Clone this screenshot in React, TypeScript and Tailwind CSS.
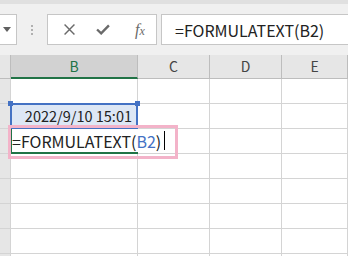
import React from 'react'

const COLS = [
  { key: 'B', w: 'w-[127px]' },
  { key: 'C', w: 'w-[72px]' },
  { key: 'D', w: 'w-[72px]' },
  { key: 'E', w: 'flex-1' },
]

const font = { fontFamily: '"Noto Sans CJK JP", "Noto Sans", sans-serif' }

function Toolbar() {
  return (
    <div className="h-[51px] bg-[#f0f0f0] flex items-start pt-[10px]">
      {/* name box */}
      <div className="w-[17px] h-[31px] bg-white border border-l-0 border-[#c6c6c6] flex items-center justify-center">
        <svg width="8" height="5" viewBox="0 0 8 5" className="-ml-[2px]">
          <path d="M0 0 H8 L4 5 Z" fill="#606060" />
        </svg>
      </div>
      <div className="w-[30px] h-[31px] flex flex-col items-center justify-center gap-[2px]">
        <span className="w-[2px] h-[2px] bg-[#b0b0b0]" />
        <span className="w-[2px] h-[2px] bg-[#b0b0b0]" />
        <span className="w-[2px] h-[2px] bg-[#b0b0b0]" />
      </div>
      {/* cancel / enter / fx */}
      <div className="w-[110px] h-[31px] bg-white border border-[#c6c6c6] flex items-center">
        <div className="w-[38px] flex justify-center pl-[4px]">
          <svg width="11" height="11" viewBox="0 0 10 10">
            <path d="M0.5 0.5 L9.5 9.5 M9.5 0.5 L0.5 9.5" stroke="#6a6a6a" strokeWidth="1.3" />
          </svg>
        </div>
        <div className="w-[34px] flex justify-center">
          <svg width="14" height="11" viewBox="0 0 13 10">
            <path d="M1 5 L4.8 8.6 L12 1.2" stroke="#6a6a6a" strokeWidth="2.2" fill="none" />
          </svg>
        </div>
        <div
          className="flex-1 flex justify-center pl-[4px] text-[16px] italic text-[#6a6a6a] leading-none"
          style={{ fontFamily: '"Liberation Serif", serif' }}
        >
          f<span className="text-[12px] relative top-[3px]">x</span>
        </div>
      </div>
      {/* formula input */}
      <div className="ml-[4px] flex-1 h-[31px] bg-white border border-r-0 border-[#c6c6c6] flex items-center pl-[13px]">
        <span className="text-[16px] text-[#222]" style={font}>=FORMULATEXT(B2)</span>
      </div>
    </div>
  )
}

function Header() {
  return (
    <div className="flex h-[24px] bg-[#e6e6e6]" style={font}>
      <div className="w-[11px] border-r border-b border-[#bdbdbd]" />
      {COLS.map(c =>
        c.key === 'B' ? (
          <div
            key={c.key}
            className={`${c.w} bg-[#d2d2d2] border-r border-[#bdbdbd] border-b-2 border-b-[#217346] flex items-center justify-center text-[14px] text-[#217346]`}
          >
            {c.key}
          </div>
        ) : (
          <div
            key={c.key}
            className={`${c.w} border-r border-b border-[#bdbdbd] flex items-center justify-center text-[14px] text-[#444]`}
          >
            {c.key}
          </div>
        )
      )}
    </div>
  )
}

function Row() {
  return (
    <div className="flex h-[25px]">
      <div className="w-[11px] bg-[#e6e6e6] border-r border-b border-[#d4d4d4]" />
      {COLS.map(c => (
        <div key={c.key} className={`${c.w} border-r border-b border-[#d4d4d4] bg-white`} />
      ))}
    </div>
  )
}

export default function App() {
  return (
    <div className="w-[348px] h-[256px] overflow-hidden bg-white relative">
      <div className="h-[4px] bg-[#e0e0e0]" />
      <Toolbar />
      <Header />
      <div className="relative">
        {[0, 1, 2, 3, 4, 5, 6, 7].map(i => (
          <Row key={i} />
        ))}

        {/* B2 referenced range */}
        <div
          className="absolute left-[10px] top-[24px] w-[128px] h-[26px] border-2 border-[#4472c4] bg-[#dde7f5] flex items-center justify-end pr-[4px] text-[14.5px] text-[#222]"
          style={font}
        >
          2022/9/10 15:01
        </div>
        <span className="absolute left-[8px] top-[22px] w-[5px] h-[5px] bg-[#4472c4]" />
        <span className="absolute left-[135px] top-[22px] w-[5px] h-[5px] bg-[#4472c4]" />

        {/* editing cell B3 */}
        <div className="absolute left-[10px] top-[50px] w-[128px] h-[25px] border-l-2 border-b-2 border-[#217346]" />
        <div
          className="absolute left-[12px] top-[50px] w-[157px] h-[23px] bg-white flex items-center text-[16px] text-[#222] whitespace-nowrap"
          style={font}
        >
          =FORMULATEXT(<span className="text-[#4472c4]">B2</span>)
          <span className="ml-[3px] w-[1px] h-[19px] bg-black" />
        </div>

        {/* annotation */}
        <div className="absolute left-[8px] top-[46px] w-[170px] h-[34px] border-[3px] border-[#f3b3c9]" />
      </div>
    </div>
  )
}
